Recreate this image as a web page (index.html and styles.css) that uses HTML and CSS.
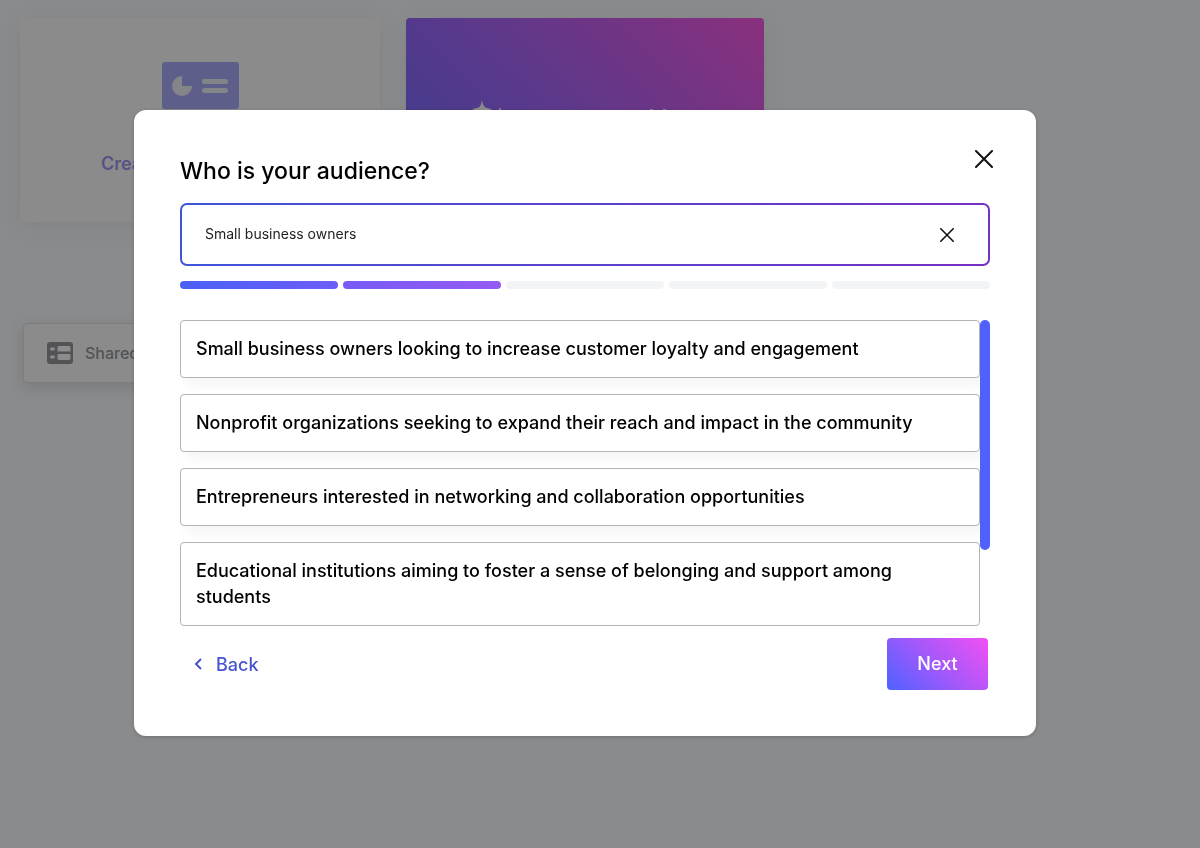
FILE: index.html
```html
<!DOCTYPE html>
<html lang="en">
<head>
<meta charset="utf-8">
<meta name="viewport" content="width=device-width, initial-scale=1">
<title>Who is your audience?</title>
<link rel="stylesheet" href="styles.css">
</head>
<body>
<main class="page" aria-hidden="true">
  <div class="cards">
    <section class="card">
      <svg class="card-icon" viewBox="0 0 78 48" width="78" height="48">
        <rect x="1" width="77" height="47" rx="3" fill="#aaaefb"/>
        <path d="M20 14a10 10 0 1 0 10 10H20z" transform="translate(1 0)" fill="#eef2f7"/>
        <path d="M43.500 19.500h21M43.500 28.500h21" stroke="#eef2f7" stroke-width="5" stroke-linecap="round"/>
      </svg>
      <p class="card-title">Create</p>
    </section>
    <section class="card card-ai">
      <svg viewBox="0 0 200 40" width="200" height="40">
        <path d="M16 0q1 6.500 3.500 7.500q2 .800 6.500 1.500q-7.500 2-10 9q-2.500-7-10-9q4.500-.700 6.500-1.500q2.500-1 3.500-7.500z" fill="#fff"/>
        <path d="M34 7q1 4 5 5q-4 1-5 5q-1-4-5-5q4-1 5-5z" fill="#fff"/>
        <path d="M184 9h3v10h-3zM197 9h3v10h-3z" fill="#fff"/>
      </svg>
    </section>
  </div>
  <div class="shared">
    <svg viewBox="0 0 26 22" width="26" height="22">
      <rect x="0" y="0" width="26" height="22" rx="3" fill="#94979c"/>
      <path d="M12 4h10a1.500 1.500 0 0 1 1.500 1.500v4h-13v-4a1.500 1.500 0 0 1 1.500-1.500zM10.500 12h13v4.500a1.500 1.500 0 0 1-1.500 1.500h-10a1.500 1.500 0 0 1-1.500-1.500z" fill="#fff"/>
      <rect x="3" y="5.500" width="5" height="3" rx="1.500" fill="#fff"/>
      <rect x="3" y="13.500" width="5" height="3" rx="1.500" fill="#fff"/>
    </svg>
    <span>Shared</span>
  </div>
</main>

<div class="overlay">
  <form class="modal" role="dialog" aria-modal="true" aria-labelledby="title">
    <header class="modal-header">
      <h1 id="title"><label for="audience">Who is your audience?</label></h1>
      <button class="icon-button close" type="button" aria-label="Close">
        <svg viewBox="0 0 18 18" width="18" height="18"><path d="M1 1l16 16M17 1L1 17"/></svg>
      </button>
    </header>

    <div class="field">
      <input id="audience" type="text" value="Small business owners">
      <button class="icon-button clear" type="button" aria-label="Clear">
        <svg viewBox="0 0 14 14" width="14" height="14"><path d="M.8.800l12.400 12.400M13.200.800L.8 13.200"/></svg>
      </button>
    </div>

    <div class="progress" role="progressbar" aria-label="Step" aria-valuemin="0" aria-valuemax="5" aria-valuenow="2">
      <span class="step step-one"></span>
      <span class="step step-two"></span>
      <span class="step"></span>
      <span class="step"></span>
      <span class="step"></span>
    </div>

    <div class="suggestions">
      <div class="options">
        <button class="option" type="button">Small business owners looking to increase customer loyalty and engagement</button>
        <button class="option" type="button">Nonprofit organizations seeking to expand their reach and impact in the community</button>
        <button class="option" type="button">Entrepreneurs interested in networking and collaboration opportunities</button>
        <button class="option" type="button">Educational institutions aiming to foster a sense of belonging and support among students</button>
      </div>
      <div class="scroll-thumb"></div>
    </div>

    <footer class="modal-footer">
      <button class="back" type="button">
        <svg viewBox="0 0 8 12" width="8" height="12"><path d="M7 1L2 6l5 5"/></svg>
        Back
      </button>
      <button class="next" type="submit">Next</button>
    </footer>
  </form>
</div>
</body>
</html>
```
FILE: styles.css
```css
* {
  box-sizing: border-box;
}

body {
  margin: 0;
  min-height: 100vh;
  background: #fbfdff;
  color: #000;
  font-family: Inter, "Liberation Sans", sans-serif;
}

button,
input {
  margin: 0;
  padding: 0;
  border: 0;
  background: none;
  color: inherit;
  font: inherit;
}

button {
  cursor: pointer;
}

svg {
  display: block;
  flex: none;
}

/* Page behind the dialog */
.page {
  padding: 18px 20px;
}

.cards {
  display: flex;
  gap: 26px;
}

.card {
  display: flex;
  flex-direction: column;
  width: 360px;
  height: 204px;
  padding-top: 44px;
  border-radius: 4px;
  background: #fefefe;
  box-shadow: 0 4px 24px rgba(40, 50, 70, 0.08);
}

.card-icon {
  align-self: center;
}

.card-title {
  margin: 41px 0 0 81px;
  color: #9c99f2;
  font-size: 18px;
  font-weight: 600;
  line-height: 26px;
}

.card-ai {
  width: 358px;
  padding: 82px 60px 0;
  background: linear-gradient(45deg, #6a70ff, #a468ff 45%, #fb58e4);
}

.shared {
  display: flex;
  align-items: center;
  gap: 12px;
  width: 300px;
  height: 60px;
  margin: 101px 0 0 3px;
  padding: 0 23px;
  border: 1px solid #e3e4e6;
  border-radius: 4px;
  background: #fefefe;
  box-shadow: 0 4px 16px rgba(40, 50, 70, 0.16);
  color: #94979c;
  font-size: 16px;
  font-weight: 500;
}

/* Dialog */
.overlay {
  position: fixed;
  inset: 0;
  display: flex;
  align-items: center;
  justify-content: center;
  padding: 0 30px 2px 0;
  background: rgba(0, 0, 0, 0.45);
}

.modal {
  width: 902px;
  max-width: 100%;
  padding: 39px 46px 46px;
  border-radius: 12px;
  background: #fff;
  box-shadow: 0 1px 4px rgba(0, 0, 0, 0.2);
}

.modal-header {
  display: flex;
  align-items: flex-start;
  justify-content: space-between;
  margin-bottom: 14px;
}

h1 {
  margin: 4px 0 0;
  font-size: 23px;
  font-weight: 500;
  line-height: 36px;
}

.icon-button {
  display: grid;
  place-items: center;
  width: 20px;
  height: 20px;
}

.icon-button path {
  fill: none;
  stroke: #111;
  stroke-width: 2;
  stroke-linecap: round;
}

.clear path {
  stroke-width: 1.600;
}

.close {
  margin-right: -4px;
}

.field {
  display: flex;
  align-items: center;
  height: 63px;
  padding: 0 31px 0 23px;
  border: 2px solid transparent;
  border-radius: 7px;
  background:
    linear-gradient(#fff, #fff) padding-box,
    linear-gradient(90deg, #3f55d8, #7630c4) border-box;
}

.field input {
  flex: 1;
  min-width: 0;
  height: 40px;
  padding-bottom: 2px;
  outline: 0;
  color: #222;
  font-size: 14px;
}

.progress {
  display: flex;
  gap: 5px;
  margin: 15px 0 31px;
}

.step {
  flex: 1;
  height: 8px;
  border-radius: 4px;
  background: #f3f4f6;
}

.step-one {
  background: linear-gradient(90deg, #4a60f5, #6c5ef8);
}

.step-two {
  background: linear-gradient(90deg, #785af5, #955bf2);
}

.suggestions {
  display: flex;
  align-items: flex-start;
}

.options {
  display: flex;
  flex: 1;
  flex-direction: column;
  gap: 16px;
}

.option {
  padding: 15px 15px;
  border: 1px solid #b2b3b5;
  border-radius: 4px;
  background: #fff;
  box-shadow: 6px 8px 12px rgba(0, 0, 0, 0.04);
  font-size: 18px;
  font-weight: 500;
  line-height: 26px;
  text-align: left;
}

.option:last-child {
  box-shadow: none;
}

.scroll-thumb {
  width: 10px;
  height: 230px;
  border-radius: 5px;
  background: #5060fa;
}

.modal-footer {
  display: flex;
  align-items: center;
  justify-content: space-between;
  margin-top: 12px;
  padding: 0 2px 0 14px;
}

.back {
  display: flex;
  align-items: center;
  gap: 14px;
  color: #4754d2;
  font-size: 18px;
  font-weight: 500;
}

.back path {
  fill: none;
  stroke: currentColor;
  stroke-width: 2;
}

.next {
  width: 101px;
  height: 52px;
  padding-bottom: 2px;
  border-radius: 4px;
  background: linear-gradient(45deg, #4d62ff, #a558fb 50%, #f250f3);
  color: #fff;
  font-size: 18px;
  font-weight: 500;
}
```
